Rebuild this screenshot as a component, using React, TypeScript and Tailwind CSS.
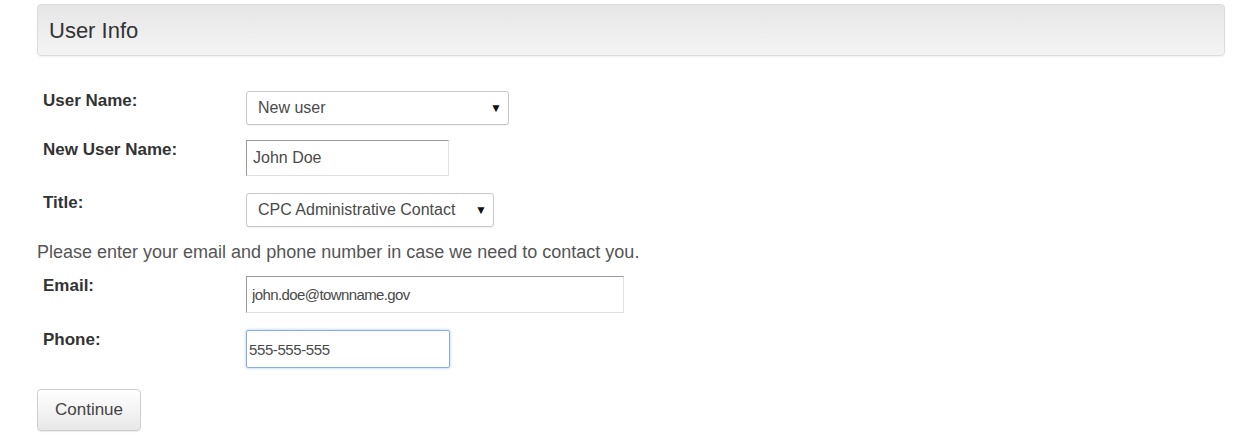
export default function App() {
  return (
    <div className="h-[436px] w-[1240px] overflow-hidden bg-white font-['Liberation_Sans',Arial,sans-serif] text-[#333]">
      <div className="ml-[37px] mr-[15px] mt-[4px] flex h-[52px] items-center rounded-[4px] border border-[#dcdcdc] bg-gradient-to-b from-[#e6e6e6] to-[#f4f4f4] pl-[11px] pt-[2px] shadow-[0_1px_2px_rgba(0,0,0,0.06)]">
        <h2 className="text-[22px] leading-none text-[#333]">User Info</h2>
      </div>

      <div className="mt-[35px]">
        <FormRow label="User Name:">
          <SelectBox value="New user" width="w-[263px]" />
        </FormRow>
        <FormRow label="New User Name:" className="mt-[15px]">
          <input
            readOnly
            value="John Doe"
            className="h-[36px] w-[203px] border border-t-[#9a9a9a] border-l-[#9a9a9a] border-r-[#e0e0e0] border-b-[#e0e0e0] bg-white px-[6px] text-[16px] text-[#4a4a4a] outline-none"
          />
        </FormRow>
        <FormRow label="Title:" className="mt-[17px]">
          <SelectBox value="CPC Administrative Contact" width="w-[248px]" />
        </FormRow>

        <p className="ml-[37px] mt-[14px] text-[18px] leading-[22px] text-[#555]">
          Please enter your email and phone number in case we need to contact you.
        </p>

        <FormRow label="Email:" className="mt-[13px]">
          <input
            readOnly
            value="john.doe@townname.gov"
            className="h-[37px] w-[378px] border border-t-[#9a9a9a] border-l-[#9a9a9a] border-r-[#e0e0e0] border-b-[#e0e0e0] bg-white px-[5px] text-[15px] tracking-[-0.6px] text-[#4a4a4a] outline-none"
          />
        </FormRow>
        <FormRow label="Phone:" className="mt-[17px]">
          <input
            readOnly
            value="555-555-555"
            className="h-[38px] w-[204px] rounded-[2px] border border-[#88aee6] bg-white px-[2px] text-[15px] tracking-[-0.4px] text-[#4a4a4a] shadow-[0_0_3px_rgba(90,140,220,0.55)] outline-none"
          />
        </FormRow>

        <button className="ml-[37px] mt-[21px] h-[42px] w-[104px] rounded-[4px] border border-[#cfcfcf] bg-gradient-to-b from-white to-[#e8e8e8] text-[17px] text-[#444] shadow-[0_1px_1px_rgba(0,0,0,0.08)]">
          Continue
        </button>
      </div>
    </div>
  );
}

function FormRow({
  label,
  children,
  className = "",
}: {
  label: string;
  children: React.ReactNode;
  className?: string;
}) {
  return (
    <div className={`flex items-start ${className}`}>
      <label className="w-[246px] shrink-0 pl-[43px] pt-[1px] text-[17px] font-bold leading-[18px] text-[#333]">
        {label}
      </label>
      {children}
    </div>
  );
}

function SelectBox({ value, width }: { value: string; width: string }) {
  return (
    <div
      className={`flex h-[34px] ${width} items-center justify-between rounded-[3px] border border-[#c8c8c8] bg-white pl-[11px] pr-[6px] text-[16px] text-[#4a4a4a] shadow-[0_1px_1px_rgba(0,0,0,0.06)]`}
    >
      <span>{value}</span>
      <span className="text-[12px] text-[#111]">▼</span>
    </div>
  );
}
